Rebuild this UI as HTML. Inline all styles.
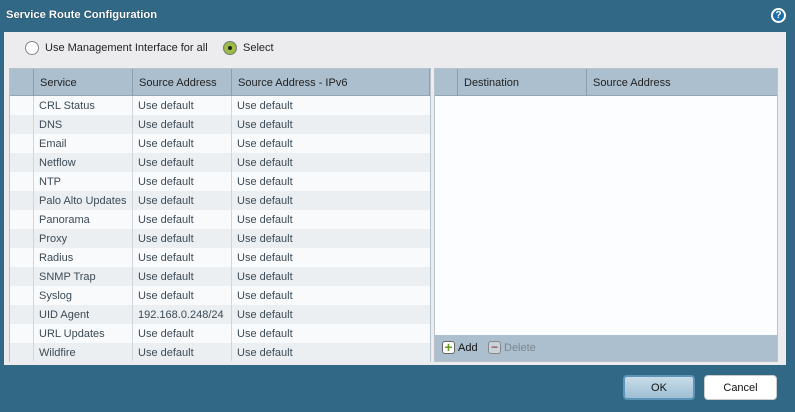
<!DOCTYPE html>
<html><head><style>
*{margin:0;padding:0;box-sizing:border-box}
body{width:795px;height:412px;background:#306885;font-family:"Liberation Sans",sans-serif;font-size:11px;color:#3c4a55;position:relative;overflow:hidden}
.title{position:absolute;left:6px;top:9px;color:#fff;font-weight:bold;font-size:11.2px;text-shadow:0 0 1px #123}
.help{position:absolute;left:771px;top:8px;width:15px;height:15px;border-radius:50%;background:#1e6fa8;border:2px solid #fff;color:#fff;font-size:10px;font-weight:bold;text-align:center;line-height:11px}
.panel{position:absolute;left:4px;top:32px;width:782px;height:333px;background:#ececee}
.radio{position:absolute;top:41px;width:14px;height:14px;border-radius:50%;border:1px solid #888;background:#fff}
.rl{position:absolute;top:42px;font-size:11px;color:#222}
.tbl{position:absolute;border:1px solid #b8c2cb;background:#fbfcfd}
.hdr{position:absolute;left:0;top:0;height:27px;background:#abbfce;border-bottom:1px solid #93a6b4}
.hc{position:absolute;top:0;height:27px;border-left:1px solid #8aa0b0;padding-left:6px;line-height:28px;color:#222}
.row{position:absolute;left:0;height:19px;width:100%}
.row span{position:absolute;top:4px}
.vl{position:absolute;top:27px;bottom:0;width:1px;background:#d0d6dc}
.btn{position:absolute;top:375px;height:25px;border-radius:4px;text-align:center;line-height:25px;font-size:11px;color:#111}
</style></head><body>
<div class="title">Service Route Configuration</div>
<div class="help">?</div>
<div class="panel"></div>
<div class="radio" style="left:25px"></div><div class="rl" style="left:45px">Use Management Interface for all</div>
<div class="radio" style="left:223px;background:#9bbd45;border-color:#777"><div style="position:absolute;left:4px;top:4px;width:4px;height:4px;border-radius:50%;background:#222"></div></div><div class="rl" style="left:243px">Select</div>

<div class="tbl" style="left:9px;top:68px;width:422px;height:294px">
<div class="hdr" style="width:420px">
<div class="hc" style="left:23px;width:99px">Service</div>
<div class="hc" style="left:122px;width:99px">Source Address</div>
<div class="hc" style="left:221px;width:199px;border-right:1px solid #8aa0b0">Source Address - IPv6</div>
</div>
<div id="rows"></div>
<div class="vl" style="left:23px"></div><div class="vl" style="left:122px"></div><div class="vl" style="left:221px"></div>
</div>

<div class="tbl" style="left:434px;top:68px;width:344px;height:294px;background:#fcfdfe">
<div class="hdr" style="width:342px">
<div class="hc" style="left:22px;width:129px">Destination</div>
<div class="hc" style="left:151px;width:191px">Source Address</div>
</div>
<div style="position:absolute;left:0;top:266px;width:342px;height:26px;background:#abbfce">
<div style="position:absolute;left:7px;top:6px;width:13px;height:13px;border:1px solid #666;border-radius:3px;background:#fff;color:#6a9a1f;font-weight:bold;font-size:14px;line-height:10px;text-align:center">+</div>
<span style="position:absolute;left:23px;top:7px;color:#111">Add</span>
<div style="position:absolute;left:53px;top:6px;width:13px;height:13px;border:1px solid #888;border-radius:3px;background:#c9d3da;color:#955;font-weight:bold;font-size:12px;line-height:10px;text-align:center">−</div>
<span style="position:absolute;left:69px;top:7px;color:#7a8890">Delete</span>
</div>
</div>

<div class="btn" style="left:623px;width:72px;background:linear-gradient(#c8dce8,#9ebfd4);border:2px solid #5d94b8;line-height:22px">OK</div>
<div class="btn" style="left:704px;width:73px;background:#fff;border:1px solid #ccc;line-height:24px">Cancel</div>
<script>
var s=["CRL Status","DNS","Email","Netflow","NTP","Palo Alto Updates","Panorama","Proxy","Radius","SNMP Trap","Syslog","UID Agent","URL Updates","Wildfire"],h="";
s.forEach(function(n,i){h+='<div class="row" style="top:'+(27+i*19)+'px;background:'+(i%2?'#eceff2':'#f9fafc')+'"><span style="left:29px">'+n+'</span><span style="left:128px">'+(n=="UID Agent"?"192.168.0.248/24":"Use default")+'</span><span style="left:227px">Use default</span></div>';});
document.getElementById("rows").outerHTML=h;
</script>
</body></html>
